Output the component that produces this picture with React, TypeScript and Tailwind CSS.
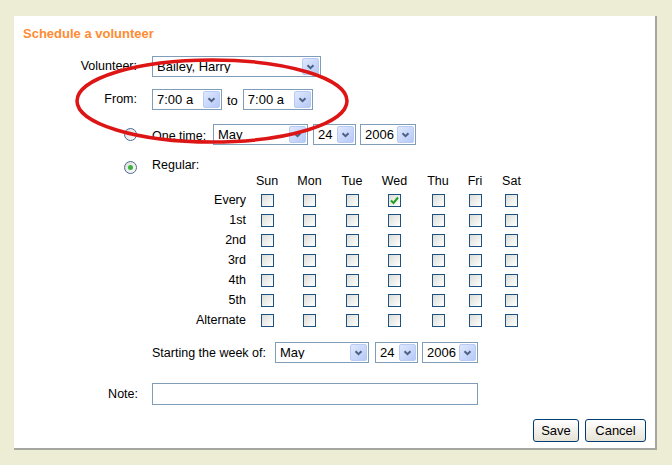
import React from 'react';

const days = ['Sun', 'Mon', 'Tue', 'Wed', 'Thu', 'Fri', 'Sat'];
const weeks = ['Every', '1st', '2nd', '3rd', '4th', '5th', 'Alternate'];

const Chevron: React.FC = () => (
  <svg width="9" height="6" viewBox="0 0 9 6">
    <path d="M1.5 1.2 L4.5 4.2 L7.5 1.2" fill="none" stroke="#4d6185" strokeWidth="2" />
  </svg>
);

const Select: React.FC<{ value: string; w: string }> = ({ value, w }) => (
  <div className={`${w} h-[21px] border border-[#7f9db9] bg-white flex items-center`}>
    <span className="flex-1 pl-[4px] text-[13px] leading-none whitespace-nowrap overflow-hidden">{value}</span>
    <span className="w-[17px] h-[17px] mr-[1px] rounded-[2px] border border-[#b9cbf3] bg-gradient-to-br from-[#dfe8fd] to-[#b6c9f7] flex items-center justify-center">
      <Chevron />
    </span>
  </div>
);

const Check: React.FC<{ checked?: boolean }> = ({ checked }) => (
  <span className="w-[13px] h-[13px] border border-[#1c5180] bg-gradient-to-br from-[#dcdcd7] to-white flex items-center justify-center">
    {checked && (
      <svg width="9" height="9" viewBox="0 0 9 9">
        <path d="M1 4.5 L3.5 7 L8 1.5" fill="none" stroke="#21a121" strokeWidth="2" />
      </svg>
    )}
  </span>
);

const Radio: React.FC<{ checked?: boolean }> = ({ checked }) => (
  <span className="w-[13px] h-[13px] rounded-full border border-[#4a6a94] bg-gradient-to-br from-[#dcdcd7] to-white flex items-center justify-center">
    {checked && <span className="w-[5px] h-[5px] rounded-full bg-[#3cb43c]" />}
  </span>
);

const App: React.FC = () => {
  return (
    <div className="relative w-[672px] h-[465px] bg-[#edecd4] pt-[16px] pl-[14px] font-['Liberation_Sans',Arial,sans-serif] text-[12.5px] text-black">
      <div className="w-[643px] h-[434px] bg-white border-r-2 border-b-2 border-[#a6a6a0]">
        {/* Title */}
        <div className="pt-[10px] pl-[9px] text-[13px] leading-[15px] font-bold text-[#ff8c33]">
          Schedule a volunteer
        </div>

        {/* Volunteer */}
        <div className="mt-[15px] flex items-center h-[21px]">
          <div className="w-[123px] text-right">Volunteer:</div>
          <div className="ml-[15px]">
            <Select w="w-[169px]" value="Bailey, Harry" />
          </div>
        </div>

        {/* From / to */}
        <div className="mt-[12px] flex items-center h-[21px]">
          <div className="w-[123px] text-right">From:</div>
          <div className="ml-[15px] flex items-center">
            <Select w="w-[70px]" value="7:00 a" />
            <span className="mx-[5px] text-[13px] pt-[2px]">to</span>
            <Select w="w-[70px]" value="7:00 a" />
          </div>
        </div>

        {/* One time */}
        <div className="mt-[14px] flex items-center h-[21px]">
          <div className="w-[123px] flex justify-end">
            <Radio />
          </div>
          <div className="ml-[15px] flex items-center">
            <span className="w-[61px] pt-[3px]">One time:</span>
            <Select w="w-[95px]" value="May" />
            <div className="ml-[5px]">
              <Select w="w-[43px]" value="24" />
            </div>
            <div className="ml-[4px]">
              <Select w="w-[56px]" value="2006" />
            </div>
          </div>
        </div>

        {/* Regular */}
        <div className="mt-[14px] flex items-start h-[13px]">
          <div className="w-[123px] flex justify-end mt-[2px]">
            <Radio checked />
          </div>
          <div className="ml-[15px] leading-[13px]">Regular:</div>
        </div>

        {/* Day grid */}
        <div className="ml-[138px] grid grid-cols-[94px_42px_43px_42px_43px_44px_30px_43px]">
          <div className="h-[18px]" />
          {days.map(d => (
            <div key={d} className="h-[18px] flex items-center justify-center">
              {d}
            </div>
          ))}
          {weeks.map(w => (
            <React.Fragment key={w}>
              <div className="h-[20px] flex items-center justify-end">{w}</div>
              {days.map(d => (
                <div key={d} className="h-[20px] flex items-center justify-center">
                  <Check checked={w === 'Every' && d === 'Wed'} />
                </div>
              ))}
            </React.Fragment>
          ))}
        </div>

        {/* Starting the week of */}
        <div className="mt-[12px] ml-[138px] flex items-center h-[21px]">
          <span className="w-[123px] pt-[2px]">Starting the week of:</span>
          <Select w="w-[94px]" value="May" />
          <div className="ml-[6px]">
            <Select w="w-[43px]" value="24" />
          </div>
          <div className="ml-[4px]">
            <Select w="w-[56px]" value="2006" />
          </div>
        </div>

        {/* Note */}
        <div className="mt-[20px] flex items-center h-[22px]">
          <div className="w-[124px] text-right">Note:</div>
          <div className="ml-[14px] w-[326px] h-[22px] border border-[#7f9db9] bg-white" />
        </div>

        {/* Buttons */}
        <div className="mt-[14px] flex justify-end gap-[6px] pr-[9px]">
          <button className="w-[46px] h-[23px] rounded-[3px] border border-[#003c74] bg-gradient-to-b from-white to-[#e6e3d6] text-[13px] leading-none">
            Save
          </button>
          <button className="w-[61px] h-[23px] rounded-[3px] border border-[#003c74] bg-gradient-to-b from-white to-[#e6e3d6] text-[13px] leading-none">
            Cancel
          </button>
        </div>
      </div>

      {/* Red highlight ellipse drawn over the form */}
      <svg className="absolute inset-0 pointer-events-none" width="672" height="465">
        <ellipse cx="212" cy="101" rx="135" ry="41" fill="none" stroke="#dd1515" strokeWidth="3.5" />
      </svg>
    </div>
  );
};

export default App;
